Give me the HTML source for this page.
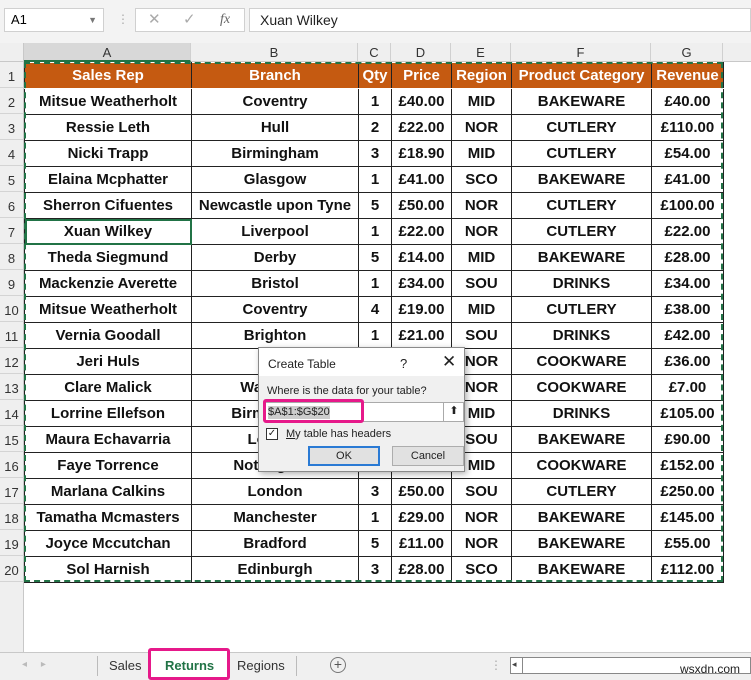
<!DOCTYPE html><html><head><style>
*{margin:0;padding:0;box-sizing:border-box}
body{width:751px;height:680px;background:#fff;font-family:"Liberation Sans",sans-serif;position:relative;overflow:hidden}
.a{position:absolute}
table{position:absolute;left:24px;top:62px;border-collapse:collapse;table-layout:fixed}
td{border:1px solid #222;height:26px;text-align:center;font-weight:bold;font-size:15px;color:#111;padding:0;white-space:nowrap;overflow:hidden}
tr.h td{background:#c55a11;color:#fff;border-color:#fff #222}
.rh{position:absolute;left:0;width:24px;height:26px;background:#efefef;border-bottom:1px solid #d4d4d4;border-right:1px solid #c8c8c8;font-size:13px;color:#333;text-align:center;line-height:30px}
.ch{position:absolute;top:43px;height:19px;background:#efefef;border-right:1px solid #d0d0d0;border-bottom:1px solid #c8c8c8;font-size:13px;color:#333;text-align:center;line-height:19px}
</style></head><body>
<div class="a" style="left:0;top:0;width:751px;height:43px;background:#f3f3f3"></div>
<div class="a" style="left:4px;top:8px;width:100px;height:24px;background:#fff;border:1px solid #d0d0d0;font-size:13px;line-height:22px;padding-left:6px">A1<span style="position:absolute;right:6px;top:0;font-size:9px;color:#777">▼</span></div>
<div class="a" style="left:117px;top:12px;color:#aaa;font-size:12px">⋮</div>
<div class="a" style="left:135px;top:8px;width:110px;height:24px;background:#fff;border:1px solid #d0d0d0;font-size:15px;color:#aaa;line-height:22px"><span style="position:absolute;left:12px">✕</span><span style="position:absolute;left:47px">✓</span><span style="position:absolute;left:84px;font-family:'Liberation Serif';font-style:italic;color:#666;font-size:14px">fx</span></div>
<div class="a" style="left:249px;top:8px;width:502px;height:24px;background:#fff;border:1px solid #d0d0d0;font-size:14px;line-height:22px;padding-left:10px;color:#222">Xuan Wilkey</div>
<div class="a" style="left:0;top:43px;width:24px;height:19px;background:#efefef;border-right:1px solid #c8c8c8;border-bottom:1px solid #c8c8c8"></div>
<div class="ch" style="left:24px;width:167px;background:#d8d8d8;border-bottom:2px solid #217346">A</div>
<div class="ch" style="left:191px;width:167px">B</div>
<div class="ch" style="left:358px;width:33px">C</div>
<div class="ch" style="left:391px;width:60px">D</div>
<div class="ch" style="left:451px;width:60px">E</div>
<div class="ch" style="left:511px;width:140px">F</div>
<div class="ch" style="left:651px;width:72px">G</div>
<div class="ch" style="left:723px;width:28px;border-right:none"></div>
<div class="a" style="left:0;top:62px;width:24px;height:590px;background:#efefef;border-right:1px solid #c8c8c8"></div>
<div id="rh"></div>
<table>
<colgroup><col style="width:167px"><col style="width:167px"><col style="width:33px"><col style="width:60px"><col style="width:60px"><col style="width:140px"><col style="width:72px"></colgroup>
<tr class="h"><td>Sales Rep</td><td>Branch</td><td>Qty</td><td>Price</td><td>Region</td><td>Product Category</td><td>Revenue</td></tr>
<tr><td>Mitsue Weatherholt</td><td>Coventry</td><td>1</td><td>£40.00</td><td>MID</td><td>BAKEWARE</td><td>£40.00</td></tr>
<tr><td>Ressie Leth</td><td>Hull</td><td>2</td><td>£22.00</td><td>NOR</td><td>CUTLERY</td><td>£110.00</td></tr>
<tr><td>Nicki Trapp</td><td>Birmingham</td><td>3</td><td>£18.90</td><td>MID</td><td>CUTLERY</td><td>£54.00</td></tr>
<tr><td>Elaina Mcphatter</td><td>Glasgow</td><td>1</td><td>£41.00</td><td>SCO</td><td>BAKEWARE</td><td>£41.00</td></tr>
<tr><td>Sherron Cifuentes</td><td>Newcastle upon Tyne</td><td>5</td><td>£50.00</td><td>NOR</td><td>CUTLERY</td><td>£100.00</td></tr>
<tr><td style="outline:2px solid #217346;outline-offset:-2px">Xuan Wilkey</td><td>Liverpool</td><td>1</td><td>£22.00</td><td>NOR</td><td>CUTLERY</td><td>£22.00</td></tr>
<tr><td>Theda Siegmund</td><td>Derby</td><td>5</td><td>£14.00</td><td>MID</td><td>BAKEWARE</td><td>£28.00</td></tr>
<tr><td>Mackenzie Averette</td><td>Bristol</td><td>1</td><td>£34.00</td><td>SOU</td><td>DRINKS</td><td>£34.00</td></tr>
<tr><td>Mitsue Weatherholt</td><td>Coventry</td><td>4</td><td>£19.00</td><td>MID</td><td>CUTLERY</td><td>£38.00</td></tr>
<tr><td>Vernia Goodall</td><td>Brighton</td><td>1</td><td>£21.00</td><td>SOU</td><td>DRINKS</td><td>£42.00</td></tr>
<tr><td>Jeri Huls</td><td>York</td><td>2</td><td>£18.00</td><td>NOR</td><td>COOKWARE</td><td>£36.00</td></tr>
<tr><td>Clare Malick</td><td>Wakefield</td><td>1</td><td>£7.00</td><td>NOR</td><td>COOKWARE</td><td>£7.00</td></tr>
<tr><td>Lorrine Ellefson</td><td>Birmingham</td><td>3</td><td>£35.00</td><td>MID</td><td>DRINKS</td><td>£105.00</td></tr>
<tr><td>Maura Echavarria</td><td>London</td><td>2</td><td>£45.00</td><td>SOU</td><td>BAKEWARE</td><td>£90.00</td></tr>
<tr><td>Faye Torrence</td><td>Nottingham</td><td>4</td><td>£38.00</td><td>MID</td><td>COOKWARE</td><td>£152.00</td></tr>
<tr><td>Marlana Calkins</td><td>London</td><td>3</td><td>£50.00</td><td>SOU</td><td>CUTLERY</td><td>£250.00</td></tr>
<tr><td>Tamatha Mcmasters</td><td>Manchester</td><td>1</td><td>£29.00</td><td>NOR</td><td>BAKEWARE</td><td>£145.00</td></tr>
<tr><td>Joyce Mccutchan</td><td>Bradford</td><td>5</td><td>£11.00</td><td>NOR</td><td>BAKEWARE</td><td>£55.00</td></tr>
<tr><td>Sol Harnish</td><td>Edinburgh</td><td>3</td><td>£28.00</td><td>SCO</td><td>BAKEWARE</td><td>£112.00</td></tr>
</table>
<div class="a" style="left:24px;top:62px;width:699px;height:520px;border:2px dashed #217346"></div>
<script>
var s='';for(var i=1;i<=20;i++){s+='<div class="rh" style="top:'+(62+(i-1)*26)+'px">'+i+'</div>';}
document.getElementById('rh').innerHTML=s;
</script>
<!-- dialog -->
<div class="a" style="left:258px;top:347px;width:207px;height:125px;background:#f0f0f0;border:1px solid #8a8a8a;box-shadow:2px 2px 6px rgba(0,0,0,.3);font-size:11px;color:#222">
<div class="a" style="left:0;top:0;width:205px;height:28px;background:#fff"></div>
<div class="a" style="left:9px;top:9px;font-size:12px">Create Table</div>
<div class="a" style="left:141px;top:8px;font-size:13px">?</div>
<div class="a" style="left:183px;top:4px;font-size:17px">✕</div>
<div class="a" style="left:8px;top:37px">Where is the data for your table?</div>
<div class="a" style="left:6px;top:54px;width:199px;height:20px;background:#fff;border:1px solid #aaa"></div>
<div class="a" style="left:184px;top:54px;width:21px;height:20px;border-left:1px solid #aaa;text-align:center;font-size:11px;line-height:18px">⬆</div>
<div class="a" style="left:9px;top:58px;background:#ccc;line-height:13px">$A$1:$G$20</div>
<div class="a" style="left:4px;top:51px;width:101px;height:24px;border:3px solid #e6198a;border-radius:3px"></div>
<div class="a" style="left:7px;top:80px;width:12px;height:12px;border:1px solid #333;background:#fff;font-size:10px;line-height:10px;text-align:center">✓</div>
<div class="a" style="left:27px;top:80px"><u>M</u>y table has headers</div>
<div class="a" style="left:49px;top:98px;width:72px;height:20px;background:#e1e1e1;border:2px solid #2a7ad4;text-align:center;line-height:16px">OK</div>
<div class="a" style="left:133px;top:98px;width:72px;height:20px;background:#e1e1e1;border:1px solid #adadad;text-align:center;line-height:18px">Cancel</div>
</div>
<!-- tab bar -->
<div class="a" style="left:0;top:652px;width:751px;height:28px;background:#f0f0f0;border-top:1px solid #c8c8c8"></div>
<div class="a" style="left:22px;top:659px;color:#bbb;font-size:10px">◂ &nbsp;&nbsp;&nbsp; ▸</div>
<div class="a" style="left:97px;top:656px;width:1px;height:20px;background:#bbb"></div>
<div class="a" style="left:109px;top:658px;font-size:13px;color:#333">Sales</div>
<div class="a" style="left:151px;top:652px;width:76px;height:26px;background:#fff"></div>
<div class="a" style="left:165px;top:658px;font-size:13px;color:#217346;font-weight:bold">Returns</div>
<div class="a" style="left:148px;top:648px;width:82px;height:32px;border:3px solid #e6198a;border-radius:3px"></div>
<div class="a" style="left:237px;top:658px;font-size:13px;color:#333">Regions</div>
<div class="a" style="left:296px;top:656px;width:1px;height:20px;background:#bbb"></div>
<div class="a" style="left:330px;top:657px;width:16px;height:16px;border:1px solid #777;border-radius:50%;text-align:center;line-height:13px;font-size:14px;color:#555">+</div>
<div class="a" style="left:490px;top:658px;color:#aaa;font-size:12px">⋮</div>
<div class="a" style="left:510px;top:657px;width:241px;height:17px;background:#fff;border:1px solid #888"></div>
<div class="a" style="left:512px;top:659px;font-size:9px;color:#444">◂</div>
<div class="a" style="left:522px;top:658px;width:1px;height:15px;background:#888"></div>
<div class="a" style="left:680px;top:662px;font-size:12px;color:#222">wsxdn.com</div>
</body></html>
